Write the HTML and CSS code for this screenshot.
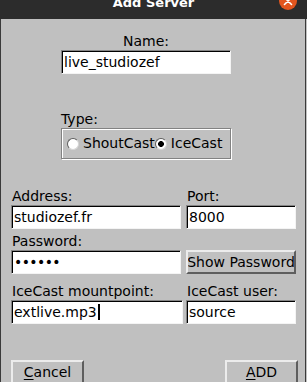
FILE: index.html
```html
<!DOCTYPE html>
<html lang="en">
<head>
    <meta charset="UTF-8">
    <meta name="viewport" content="width=device-width, initial-scale=1.0">
    <title>Add Server</title>
    <link rel="stylesheet" href="styles.css">
</head>
<body>
    <div class="window">
        <div class="titlebar">
            <span></span>
            <div class="title">Add Server</div>
            <div class="close">
                <svg width="18" height="18" viewBox="0 0 18 18">
                    <path d="M5.5 5.5 L12.5 12.5 M12.5 5.5 L5.5 12.5" stroke="#fff" stroke-width="1.6" stroke-linecap="round"/>
                </svg>
            </div>
        </div>
        <div class="dialog">
            <div class="top">
                <div class="label center">Name:</div>
                <div class="entry">live_studiozef</div>
                <div class="label type-label">Type:</div>
                <div class="radio-group">
                    <div class="radio"><span class="dot"></span>ShoutCast</div>
                    <div class="radio"><span class="dot checked"></span>IceCast</div>
                </div>
            </div>
            <div class="fields">
                <div class="label">Address:</div>
                <div class="label">Port:</div>
                <div class="entry addr">studiozef.fr</div>
                <div class="entry">8000</div>
                <div class="label pass-label">Password:</div>
                <div></div>
                <div class="entry addr secret">••••••</div>
                <button class="btn show" type="button">Show Password</button>
                <div class="label ice-label">IceCast mountpoint:</div>
                <div class="label ice-label">IceCast user:</div>
                <div class="entry mount">extlive.mp3<span class="caret"></span></div>
                <div class="entry">source</div>
            </div>
            <div class="actions">
                <button class="btn action" type="button"><u>C</u>ancel</button>
                <button class="btn action" type="button"><u>A</u>DD</button>
            </div>
        </div>
    </div>
</body>
</html>
```

FILE: styles.css
```css
*{
    box-sizing: border-box;
}
body {
    margin: 0;
    padding: 0;
    width: 307px;
    height: 382px;
    overflow: hidden;
    background-color: #c0c0c0;
    font-family: "DejaVu Sans", sans-serif;
    font-size: 14px;
    color: #000;
}
.window {
    height: 100%;
    display: flex;
    flex-direction: column;
}
.titlebar {
    height: 19px;
    flex: none;
    background-color: #2c2c2c;
    display: grid;
    grid-template-columns: 1fr auto 1fr;
    align-items: start;
}
.title {
    color: #fff;
    font-weight: bold;
    font-size: 13px;
    line-height: 15px;
    margin-top: -5px;
}
.close {
    justify-self: end;
    width: 18px;
    height: 18px;
    margin-top: -8px;
    margin-right: 10px;
    border-radius: 50%;
    background-color: #e2561f;
}
.close svg {
    display: block;
}
.dialog {
    flex: 1;
    width: 306px;
    border-left: 1px solid #3a3a3a;
    border-right: 1px solid #3a3a3a;
    display: flex;
    flex-direction: column;
}
.label {
    line-height: 17px;
    height: 17px;
    white-space: nowrap;
}
.center {
    text-align: center;
}
.top {
    width: 170px;
    margin-left: 60px;
    padding-top: 14px;
}
.type-label {
    margin-top: 37px;
}
.entry {
    height: 24px;
    border: 1px solid;
    border-color: #858585 #f4f4f4 #f4f4f4 #858585;
    box-shadow: inset 1px 1px #000;
    background-color: #fff;
    padding-left: 2px;
    line-height: 22px;
    white-space: nowrap;
    overflow: hidden;
}
.radio-group {
    height: 31px;
    border: 1px solid #828282;
    box-shadow: inset 1px 1px #fff, 1px 1px #fff;
    display: flex;
    align-items: center;
    padding-left: 5px;
    line-height: 17px;
}
.radio {
    display: flex;
    align-items: center;
}
.dot {
    width: 12px;
    height: 12px;
    border-radius: 50%;
    border: 1px solid;
    border-color: #5e5e5e #d6d6d6 #d6d6d6 #5e5e5e;
    background-color: #fff;
    margin-right: 4px;
}
.dot.checked {
    background: radial-gradient(circle, #000 0 2.6px, #fff 3.2px);
}
.fields {
    margin: 29px 0 0 10px;
    display: grid;
    grid-template-columns: 175px 110px;
}
.fields .label {
    padding-left: 1px;
}
.addr {
    width: 170px;
}
.mount {
    width: 172px;
}
.pass-label {
    margin-top: 4px;
}
.ice-label {
    margin-top: 9px;
}
.secret {
    letter-spacing: -0.6px;
}
.caret {
    display: inline-block;
    width: 2px;
    height: 16px;
    background-color: #000;
    vertical-align: -3px;
    margin-left: 1px;
}
.btn {
    font-family: "DejaVu Sans", sans-serif;
    font-size: 14px;
    line-height: 17px;
    color: #000;
    background-color: #c0c0c0;
    border: 2px solid;
    border-color: #ececec #5e5e5e #5e5e5e #ececec;
    padding: 0;
    display: flex;
    justify-content: center;
    white-space: nowrap;
    overflow: hidden;
}
.show {
    height: 24px;
    align-items: center;
}
.actions {
    margin-top: 36px;
    padding: 0 7px 0 10px;
    display: flex;
    justify-content: space-between;
}
.action {
    width: 73px;
    height: 28px;
    padding-top: 2px;
}
.action u {
    text-underline-offset: 2px;
}
```
